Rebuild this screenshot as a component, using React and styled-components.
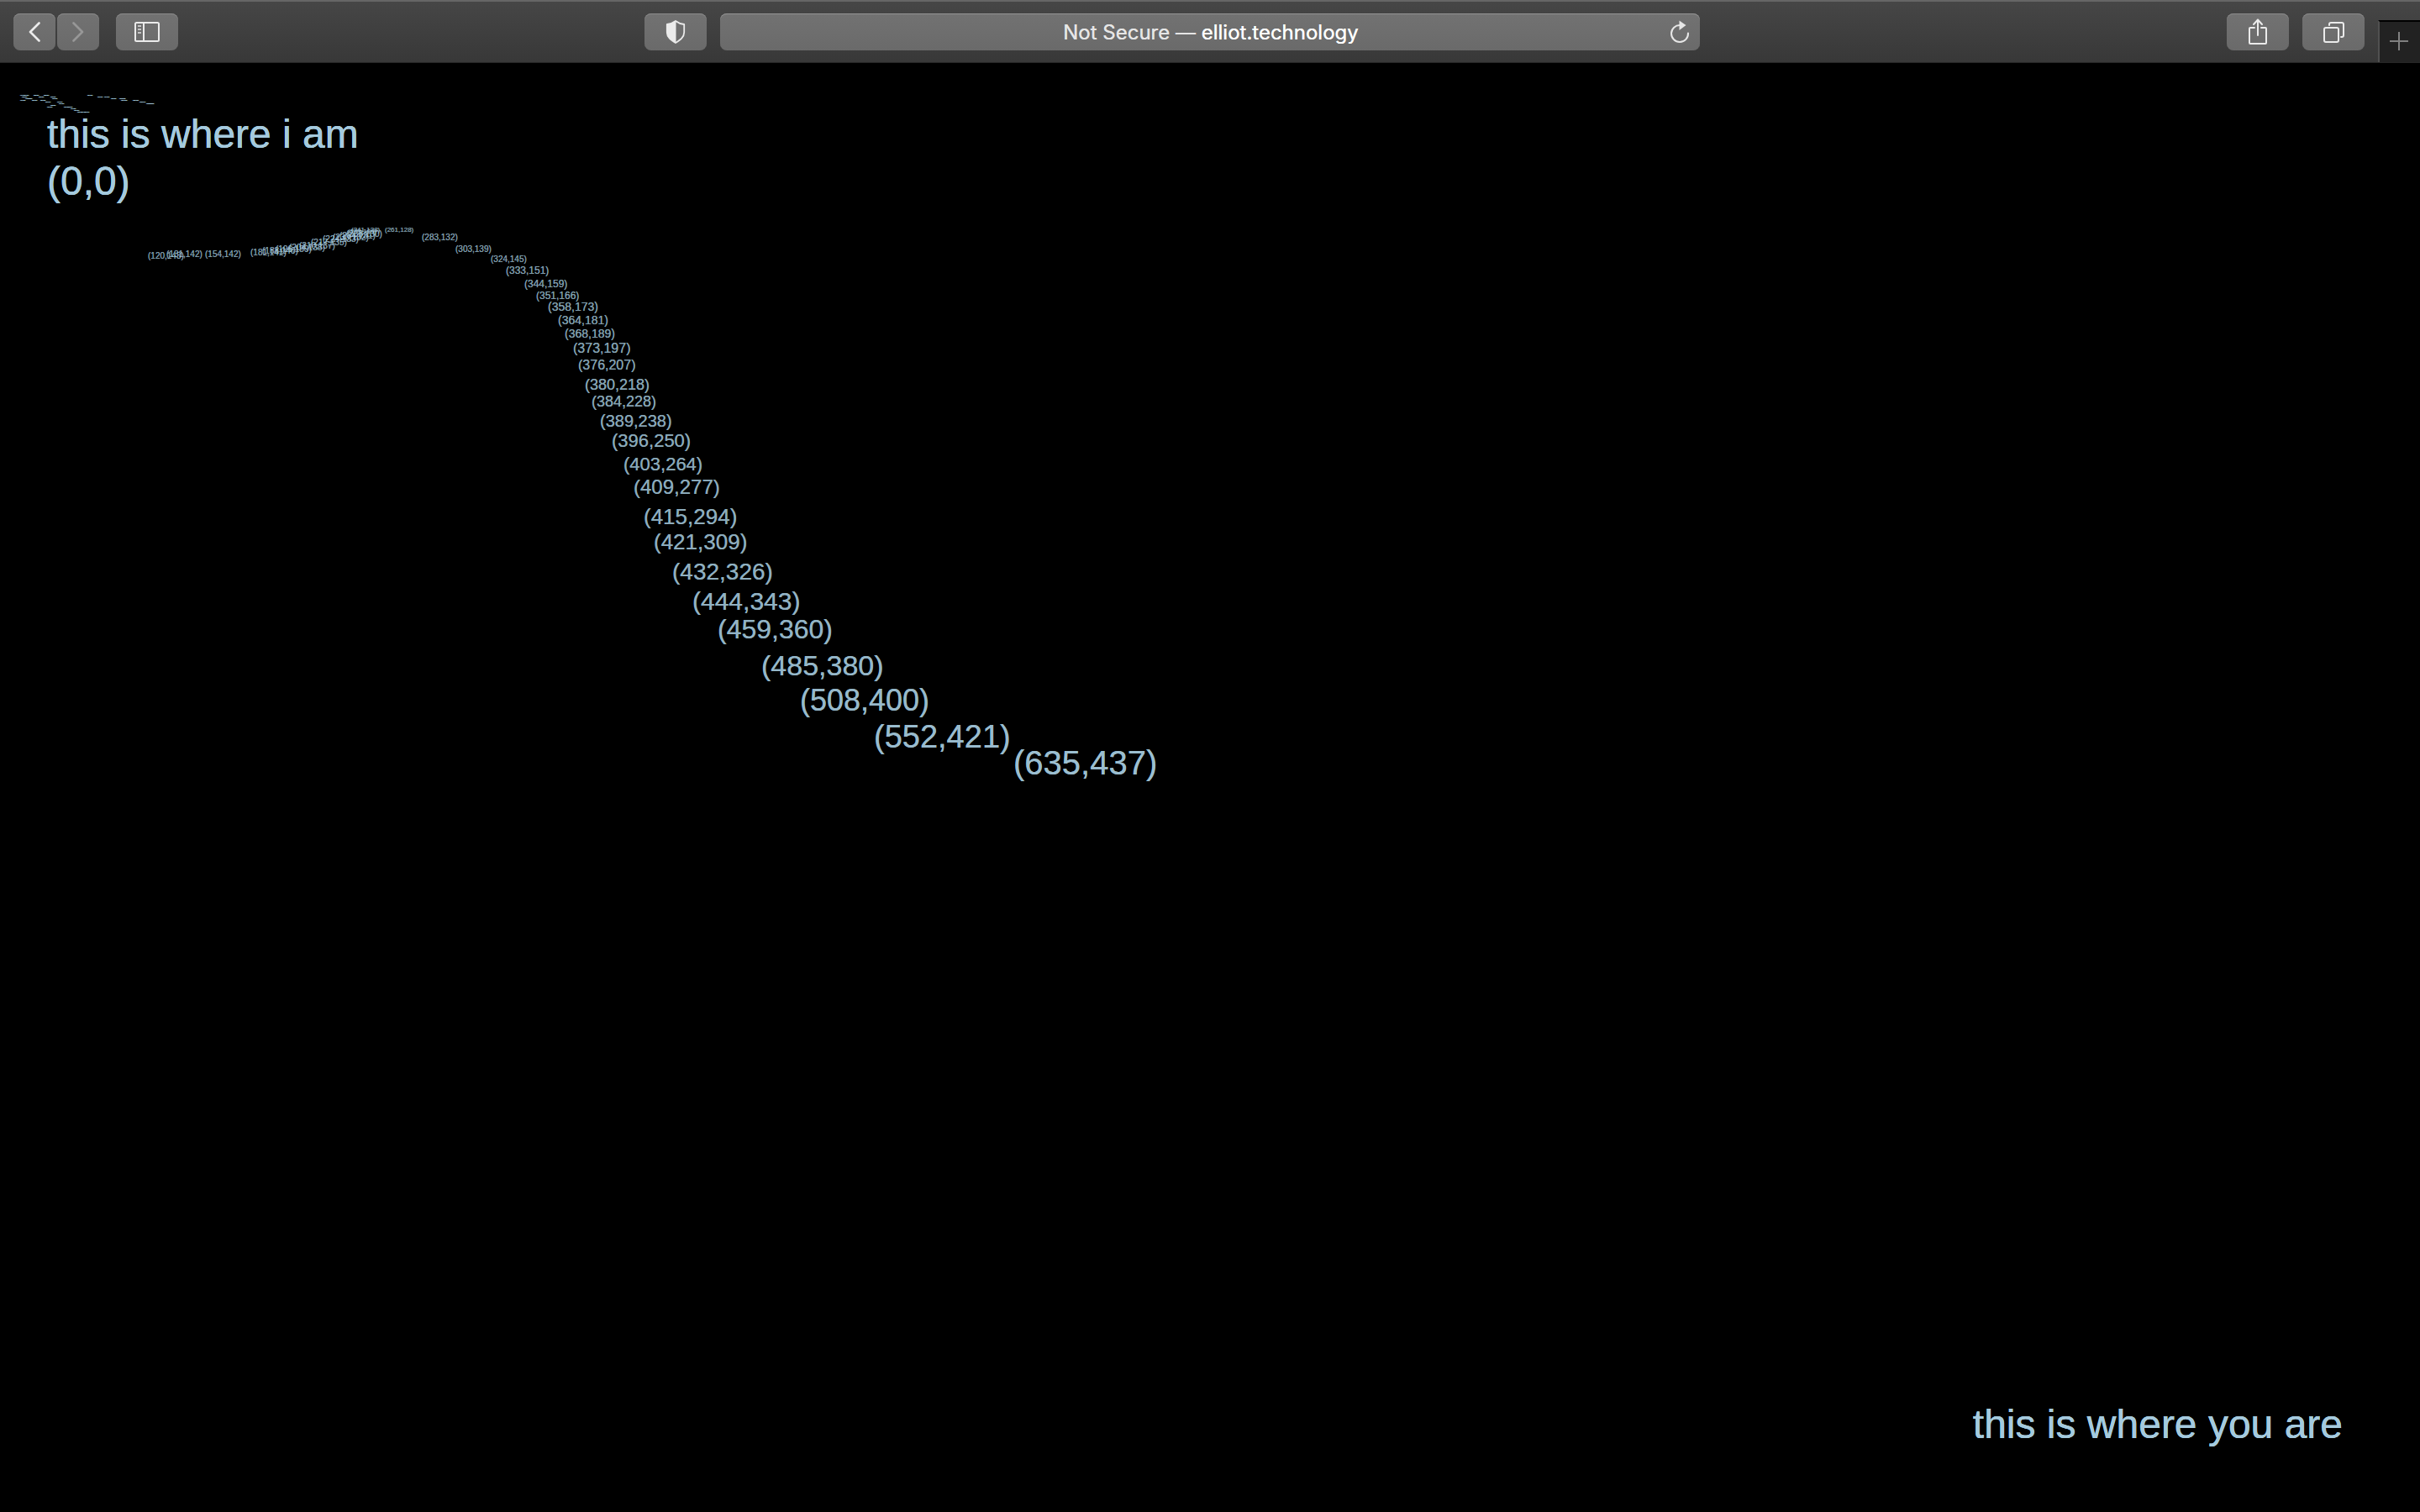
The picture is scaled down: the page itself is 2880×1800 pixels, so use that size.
import React from "react";
import styled, { createGlobalStyle } from "styled-components";

const GlobalStyle = createGlobalStyle`
  *, *::before, *::after { box-sizing: border-box; }
  body {
    margin: 0;
    background: #000;
    font-family: "Liberation Sans", Arial, Helvetica, sans-serif;
  }
`;

const Page = styled.div`
  display: flex;
  flex-direction: column;
  min-height: 100vh;
`;

const Toolbar = styled.header`
  display: grid;
  grid-template-columns: 857fr 1166fr 857fr;
  height: 75px;
  border-top: 2px solid #666;
  border-bottom: 1px solid #272727;
  background: linear-gradient(#464646, #383838);
  font-family: Inter, Roboto, sans-serif;
`;

const ToolbarSide = styled.div`
  display: flex;
  align-items: flex-start;
  justify-content: ${(p) => (p.$end ? "flex-end" : "space-between")};
  gap: 16px;
  padding: ${(p) => (p.$end ? "0" : "14px 16px 0")};
`;

const ButtonGroup = styled.div`
  display: flex;
  gap: ${(p) => p.$gap}px;
  padding-top: ${(p) => p.$top || 0}px;
`;

const NavGroup = styled.nav`
  display: flex;
  gap: 20px;
`;

const ToolButton = styled.button`
  display: flex;
  align-items: center;
  justify-content: center;
  width: ${(p) => (p.$narrow ? 50 : 74)}px;
  height: 44px;
  padding: 0;
  border: 0;
  border-radius: 8px;
  background: linear-gradient(#727272, #6a6a6a);
  box-shadow: inset 0 1px 0 #8a8a8a;
  color: #ebebeb;

  &:disabled { color: #979797; }
`;

const AddressBar = styled.div`
  display: grid;
  grid-template-columns: 48px 1fr 48px;
  align-items: center;
  height: 44px;
  margin-top: 14px;
  border-radius: 8px;
  background: linear-gradient(#727272, #6a6a6a);
  box-shadow: inset 0 1px 0 #949494;
`;

const Address = styled.button`
  grid-column: 2;
  padding: 2px 0 0 2px;
  border: 0;
  background: none;
  color: #e6e6e6;
  font: 400 24px/32px Inter, Roboto, sans-serif;
  text-shadow: 0 0 0 currentColor;
  white-space: nowrap;
`;

const Host = styled.span`
  color: #fff;
`;

const ReloadButton = styled.button`
  display: flex;
  justify-content: center;
  padding: 0;
  border: 0;
  background: none;
  color: #e6e6e6;
`;

const NewTabButton = styled.button`
  display: flex;
  align-items: center;
  justify-content: center;
  align-self: flex-end;
  width: 50px;
  height: 50px;
  padding: 0 2px 2px 0;
  border: 0;
  border-top: 2px solid #000;
  border-left: 2px solid #505050;
  background: #222;
  color: #808080;
`;

const Canvas = styled.main`
  position: relative;
  display: flex;
  flex: 1;
  flex-direction: column;
  justify-content: space-between;
  padding: 57px 92px 76px 56px;
  overflow: hidden;
  background: #000;
`;

const Place = styled.p`
  align-self: ${(p) => (p.$end ? "flex-end" : "flex-start")};
  margin: 0;
  color: #a5cade;
  font-size: 48px;
  line-height: 56px;
  text-shadow: 0 0 0 currentColor, 0 0 0 currentColor;
`;

const TrailPoint = styled.span`
  position: absolute;
  color: #a5cade;
  line-height: normal;
  text-shadow: ${(p) =>
    p.$faint
      ? "0 0 0 currentColor, 0 0 0 currentColor, 0 0 0 currentColor, 0 0 0 currentColor"
      : "0 0 0 currentColor"};
  white-space: nowrap;
`;

const trail = [
  [44, 50, 1], [46, 50, 1], [52, 50, 1], [58, 50, 1], [84, 50, 1],
  [45, 51, 1], [55, 51, 1], [62, 51, 1], [90, 51, 1], [94, 51, 1],
  [47, 52, 1], [48, 52, 1], [63, 52, 1], [98, 52, 1], [103, 52, 1],
  [44, 53, 1], [51, 53, 1], [56, 53, 1], [104, 53, 1], [111, 53, 1],
  [59, 54, 1], [66, 54, 1], [115, 54, 1],
  [67, 55, 1], [119, 55, 1], [120, 55, 1],
  [62, 56, 1],
  [60, 57, 1], [70, 57, 1], [72, 57, 1],
  [74, 58, 1],
  [76, 59, 1],
  [78, 60, 1], [80, 60, 1], [82, 60, 1],
  [120, 143, 5], [131, 142, 5], [154, 142, 5],
  [181, 141, 5], [188, 140, 5], [196, 139, 5], [204, 138, 5],
  [210, 137, 5], [217, 135, 5], [224, 133, 5], [230, 132, 5],
  [234, 131, 5], [238, 130, 5], [239, 129, 4], [241, 128, 4],
  [261, 128, 4], [283, 132, 5], [303, 139, 5], [324, 145, 5],
  [333, 151, 6], [344, 159, 6], [351, 166, 6],
  [358, 173, 7], [364, 181, 7], [368, 189, 7],
  [373, 197, 8], [376, 207, 8],
  [380, 218, 9], [384, 228, 9],
  [389, 238, 10], [396, 250, 11], [403, 264, 11],
  [409, 277, 12], [415, 294, 13], [421, 309, 13],
  [432, 326, 14], [444, 343, 15], [459, 360, 16],
  [485, 380, 17], [508, 400, 18], [552, 421, 19], [635, 437, 20],
];

const SCALE = 2;
const OFFSET_X = 32;
const OFFSET_Y = 31;

// Distance from the top of a label to its baseline, in unscaled pixels.
function labelAscent(size) {
  const ascent = Math.round(size * 0.77);
  const descent = Math.round(size * 0.23);
  return ascent + Math.round((ascent + descent) * 0.15);
}

function pointStyle([x, y, size]) {
  const fontSize = size * SCALE;
  const baseline = (y - OFFSET_Y + labelAscent(size)) * SCALE - 1;
  return {
    left: (x - OFFSET_X) * SCALE,
    top: baseline - Math.round(fontSize * 0.905),
    fontSize,
    opacity: size === 1 ? 1 : 0.7 + size * 0.012,
  };
}

const line = { fill: "none", stroke: "currentColor", strokeLinecap: "round", strokeLinejoin: "round" };

const ChevronIcon = ({ forward }) => (
  <svg width="14" height="24" viewBox="0 0 14 24" {...line} strokeWidth="2.6" aria-hidden="true">
    <path d={forward ? "M1.5 1.5L12 12L1.5 22.5" : "M12.5 1.5L2 12L12.5 22.5"} />
  </svg>
);

const SidebarIcon = () => (
  <svg width="30" height="24" viewBox="0 0 30 24" fill="none" stroke="currentColor" strokeWidth="2" aria-hidden="true">
    <rect x="1" y="1" width="28" height="22" rx="1.5" />
    <path d="M11 1V23" />
    <path d="M4 5H8M4 9H8M4 13H8" opacity="0.7" />
  </svg>
);

const ShieldIcon = () => (
  <svg width="24" height="28" viewBox="0 0 24 28" aria-hidden="true">
    <path
      d="M12 1C9 3.3 5.500 4.600 1.800 5V14.500C1.800 20.300 6.500 23.500 12 27C17.500 23.500 22.200 20.300 22.200 14.500V5C18.500 4.600 15 3.300 12 1Z"
      fill="none" stroke="currentColor" strokeWidth="1.8" strokeLinejoin="round"
    />
    <path d="M12.500 1C9 3.300 5.500 4.600 1.500 5V14.500C1.500 20.300 6.500 23.500 12.500 27Z" fill="currentColor" />
  </svg>
);

const ReloadIcon = () => (
  <svg width="24" height="28" viewBox="0 0 24 28" aria-hidden="true">
    <path d="M12.500 6A10 10 0 1 0 22 15.500" {...line} strokeWidth="2" />
    <path d="M11.500 0.500L19.500 6L11.500 12Z" fill="currentColor" />
  </svg>
);

const ShareIcon = () => (
  <svg width="24" height="32" viewBox="0 0 24 32" {...line} strokeWidth="2" aria-hidden="true">
    <path d="M8 11H3Q2 11 2 12V29Q2 30 3 30H21Q22 30 22 29V12Q22 11 21 11H16" />
    <path d="M12 20V1.500M7 7L12 1.500L17 7" />
  </svg>
);

const TabsIcon = () => (
  <svg width="26" height="26" viewBox="0 0 26 26" {...line} strokeWidth="2" aria-hidden="true">
    <rect x="2" y="8" width="17" height="17" rx="2" />
    <path d="M8 5V4Q8 2 10 2H23Q25 2 25 4V17Q25 19 23 19H22" />
  </svg>
);

const PlusIcon = () => (
  <svg width="22" height="22" viewBox="0 0 22 22" fill="none" stroke="currentColor" strokeWidth="2" aria-hidden="true">
    <path d="M0 11H22M11 0V22" />
  </svg>
);

function BrowserToolbar() {
  return (
    <Toolbar>
      <ToolbarSide>
        <NavGroup aria-label="Browser">
          <ButtonGroup $gap={2}>
            <ToolButton $narrow type="button" aria-label="Back"><ChevronIcon /></ToolButton>
            <ToolButton $narrow type="button" aria-label="Forward" disabled><ChevronIcon forward /></ToolButton>
          </ButtonGroup>
          <ToolButton type="button" aria-label="Show sidebar"><SidebarIcon /></ToolButton>
        </NavGroup>
        <ToolButton type="button" aria-label="Privacy report"><ShieldIcon /></ToolButton>
      </ToolbarSide>
      <AddressBar>
        <Address type="button">Not Secure — <Host>elliot.technology</Host></Address>
        <ReloadButton type="button" aria-label="Reload page"><ReloadIcon /></ReloadButton>
      </AddressBar>
      <ToolbarSide $end>
        <ButtonGroup $gap={16} $top={14}>
          <ToolButton type="button" aria-label="Share"><ShareIcon /></ToolButton>
          <ToolButton type="button" aria-label="Show all tabs"><TabsIcon /></ToolButton>
        </ButtonGroup>
        <NewTabButton type="button" aria-label="New tab"><PlusIcon /></NewTabButton>
      </ToolbarSide>
    </Toolbar>
  );
}

export default function App() {
  return (
    <Page>
      <GlobalStyle />
      <BrowserToolbar />
      <Canvas>
        <Place>this is where i am<br />(0,0)</Place>
        {trail.map((point) => (
          <TrailPoint key={`${point[0]}-${point[1]}`} $faint={point[2] === 1} style={pointStyle(point)}>
            {`(${point[0]},${point[1]})`}
          </TrailPoint>
        ))}
        <Place $end>this is where you are</Place>
      </Canvas>
    </Page>
  );
}
